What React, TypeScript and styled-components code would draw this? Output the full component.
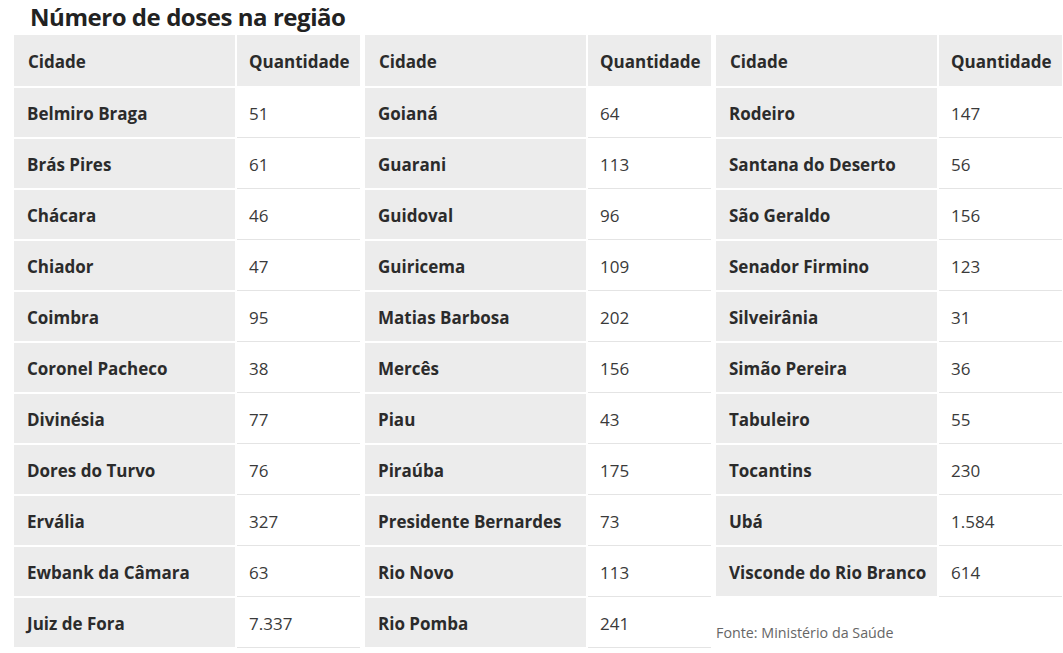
import React from 'react';
import styled, { createGlobalStyle } from 'styled-components';

const GlobalStyle = createGlobalStyle`
  body {
    margin: 0;
    background: #fff;
    font-family: "Open Sans", "Liberation Sans", sans-serif;
    color: #333;
  }
`;

const Page = styled.div`
  width: 1063px;
  height: 653px;
  overflow: hidden;
  padding: 2px 0 0 14px;
  box-sizing: border-box;
`;

const Title = styled.h2`
  margin: 0 0 4px 16px;
  font-size: 24px;
  line-height: 29px;
  font-weight: 700;
  color: #222;
  letter-spacing: -0.45px;
`;

const Tables = styled.div`
  display: grid;
  grid-template-columns: repeat(3, 346px);
  column-gap: 5px;
  align-items: start;
`;

const Column = styled.div`
  display: flex;
  flex-direction: column;
`;

const Table = styled.div`
  display: grid;
  grid-template-columns: 221px 123px;
  column-gap: 2px;
  row-gap: 2px;
`;

const HeadCell = styled.div<{ $pad: number }>`
  background: #ececec;
  height: 51px;
  box-sizing: border-box;
  padding-top: 2px;
  display: flex;
  align-items: center;
  padding-left: ${(p) => p.$pad}px;
  font-size: 17px;
  font-weight: 700;
  color: #2b2b2b;
`;

const CityCell = styled.div`
  background: #ececec;
  height: 49px;
  box-sizing: border-box;
  padding-top: 1px;
  display: flex;
  align-items: center;
  padding-left: 13px;
  font-size: 17px;
  font-weight: 700;
  color: #2b2b2b;
`;

const NumCell = styled.div`
  background: #fff;
  height: 49px;
  box-sizing: border-box;
  padding-top: 1px;
  display: flex;
  align-items: center;
  padding-left: 12px;
  font-size: 17px;
  font-weight: 400;
  color: #3a3a3a;
  box-shadow: 0 1px 0 #e4e4e4;
`;

const Source = styled.div`
  margin-top: 27px;
  font-size: 14.3px;
  color: #666;
`;

type Row = [string, string];

const col1: Row[] = [
  ['Belmiro Braga', '51'],
  ['Brás Pires', '61'],
  ['Chácara', '46'],
  ['Chiador', '47'],
  ['Coimbra', '95'],
  ['Coronel Pacheco', '38'],
  ['Divinésia', '77'],
  ['Dores do Turvo', '76'],
  ['Ervália', '327'],
  ['Ewbank da Câmara', '63'],
  ['Juiz de Fora', '7.337'],
];

const col2: Row[] = [
  ['Goianá', '64'],
  ['Guarani', '113'],
  ['Guidoval', '96'],
  ['Guiricema', '109'],
  ['Matias Barbosa', '202'],
  ['Mercês', '156'],
  ['Piau', '43'],
  ['Piraúba', '175'],
  ['Presidente Bernardes', '73'],
  ['Rio Novo', '113'],
  ['Rio Pomba', '241'],
];

const col3: Row[] = [
  ['Rodeiro', '147'],
  ['Santana do Deserto', '56'],
  ['São Geraldo', '156'],
  ['Senador Firmino', '123'],
  ['Silveirânia', '31'],
  ['Simão Pereira', '36'],
  ['Tabuleiro', '55'],
  ['Tocantins', '230'],
  ['Ubá', '1.584'],
  ['Visconde do Rio Branco', '614'],
];

const DoseTable = ({ rows }: { rows: Row[] }) => (
  <Table>
    <HeadCell $pad={14}>Cidade</HeadCell>
    <HeadCell $pad={12}>Quantidade</HeadCell>
    {rows.map(([city, qty]) => (
      <React.Fragment key={city}>
        <CityCell>{city}</CityCell>
        <NumCell>{qty}</NumCell>
      </React.Fragment>
    ))}
  </Table>
);

const App = () => (
  <>
    <GlobalStyle />
    <Page>
      <Title>Número de doses na região</Title>
      <Tables>
        <Column>
          <DoseTable rows={col1} />
        </Column>
        <Column>
          <DoseTable rows={col2} />
        </Column>
        <Column>
          <DoseTable rows={col3} />
          <Source>Fonte: Ministério da Saúde</Source>
        </Column>
      </Tables>
    </Page>
  </>
);

export default App;
